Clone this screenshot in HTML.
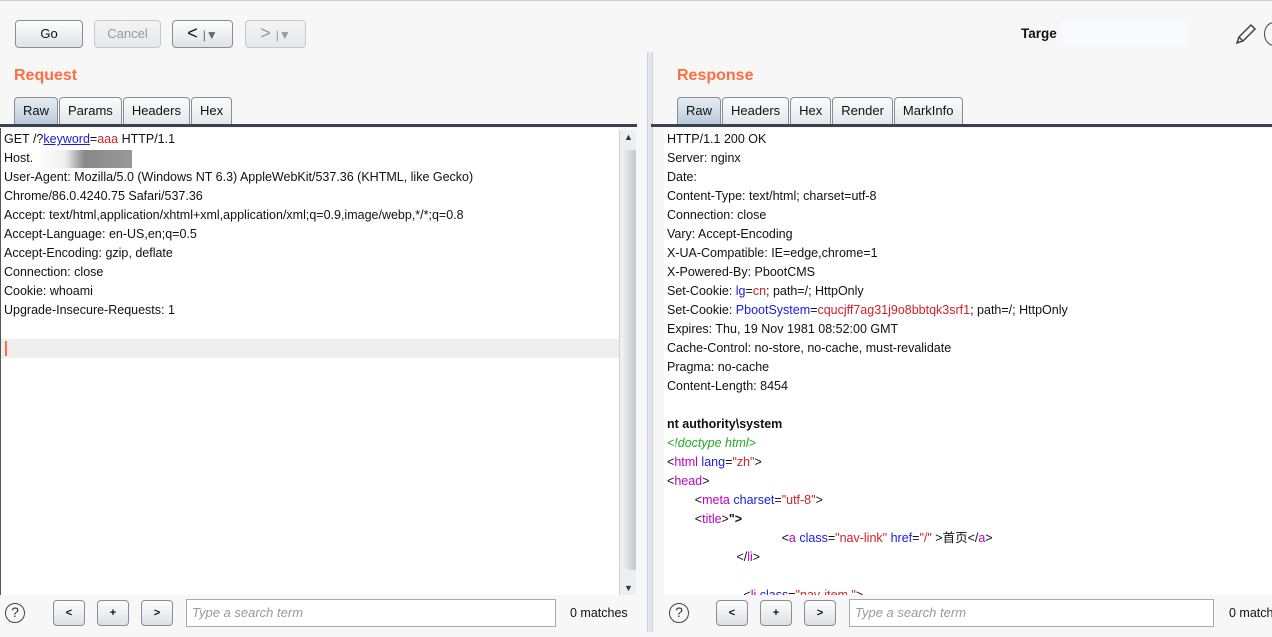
<!DOCTYPE html>
<html><head><meta charset="utf-8"><style>
*{margin:0;padding:0;box-sizing:border-box}
body{width:1272px;height:637px;overflow:hidden;background:#f7f7f7;font-family:"Liberation Sans","Noto Sans CJK SC",sans-serif;font-size:12.5px;color:#111;position:relative}
.abs{position:absolute;white-space:nowrap}
.btn{position:absolute;top:20px;height:28px;border:1px solid #8a8e94;border-radius:4px;background:linear-gradient(#fdfdfd,#dfe2e6);font-size:13px;text-align:center;line-height:26px}
.btn.dis{border-color:#c4c7cb;color:#9a9a9a;background:linear-gradient(#f4f4f4,#e6e7e9)}
.lbl{position:absolute;top:67px;color:#ff6e3f;font-weight:bold;font-size:16px}
.tabs{position:absolute;top:97px;height:28px;display:flex}
.tab{height:28px;border:1px solid #8a8e94;border-bottom:none;border-radius:4px 4px 0 0;background:linear-gradient(#fbfbfc,#e3e6ea);padding:0 8px;line-height:26px;font-size:13px;margin-right:1px}
.tab.on{background:linear-gradient(#e6edf3,#b8c9d8)}
.rule{position:absolute;top:124px;height:3px;background:#3a4250}
.ta{position:absolute;top:128px;height:467px;background:#fff;overflow:hidden}
.ln{height:19px;line-height:19px;white-space:pre}
.sb{position:absolute;top:130px;left:619px;width:17px;height:465px;background:#eceef0;border-left:1px solid #d0d2d5}
.sbtn{position:absolute;width:32px;height:26px;top:600px;border:1px solid #8a8e94;border-radius:4px;background:linear-gradient(#fdfdfd,#dde0e4);text-align:center;line-height:24px;font-size:11px;font-weight:bold}
.inp{position:absolute;top:599px;height:28px;border:1px solid #a9abae;background:#fff;color:#999;font-style:italic;font-size:13px;line-height:26px;padding-left:5px}
.help{position:absolute;top:603px;width:20px;height:20px;border:1.5px solid #444;border-radius:50%;text-align:center;line-height:17px;font-size:14px;color:#333}
.bl{color:#1a1ae0}.rd{color:#d0222a}.mg{color:#c000c0}.gr{color:#22aa22;font-style:italic}
</style></head><body>
<div class="abs" style="left:0;top:0;width:1272px;height:1px;background:#ccc"></div>
<div class="btn" style="left:15px;width:68px">Go</div>
<div class="btn dis" style="left:94px;width:67px">Cancel</div>
<div class="btn" style="left:172px;width:61px;font-size:18px;line-height:24px">&lt; <span style="font-size:12px;color:#666">|&#9660;</span></div>
<div class="btn dis" style="left:245px;width:61px;font-size:18px;line-height:24px">&gt; <span style="font-size:12px">|&#9660;</span></div>
<div class="abs" style="left:1021px;top:26px;font-weight:bold;font-size:13.5px">Targe</div>
<div class="abs" style="left:1062px;top:20px;width:125px;height:26px;background:#f8fbfc"></div>
<svg class="abs" style="left:1234px;top:22px" width="24" height="24" viewBox="0 0 24 24"><path d="M3 21 L5 15 L17 3 L21 7 L9 19 Z M5 15 L9 19" fill="none" stroke="#444" stroke-width="1.5"/></svg>
<div class="abs" style="left:1264px;top:22px;width:20px;height:24px;border:1.5px solid #444;border-radius:50%"></div>

<div class="lbl" style="left:14px">Request</div>
<div class="tabs" style="left:14px"><div class="tab on">Raw</div><div class="tab">Params</div><div class="tab">Headers</div><div class="tab">Hex</div></div>
<div class="rule" style="left:0;width:637px"></div>
<div class="ta" style="left:0;width:619px;border-left:1px solid #555">
<div style="padding-left:3px;padding-top:2px">
<div class="ln">GET /?<span class="bl" style="text-decoration:underline">keyword</span>=<span class="rd">aaa</span> HTTP/1.1</div>
<div class="ln">Host. <span style="display:inline-block;width:95px;height:18px;vertical-align:middle;background:linear-gradient(90deg,#fff 0,#eee 30%,#888 50%,#999 100%)"></span></div>
<div class="ln">User-Agent: Mozilla/5.0 (Windows NT 6.3) AppleWebKit/537.36 (KHTML, like Gecko)</div>
<div class="ln">Chrome/86.0.4240.75 Safari/537.36</div>
<div class="ln">Accept: text/html,application/xhtml+xml,application/xml;q=0.9,image/webp,*/*;q=0.8</div>
<div class="ln">Accept-Language: en-US,en;q=0.5</div>
<div class="ln">Accept-Encoding: gzip, deflate</div>
<div class="ln">Connection: close</div>
<div class="ln">Cookie: whoami</div>
<div class="ln">Upgrade-Insecure-Requests: 1</div>
<div class="ln"> </div>
</div>
<div class="abs" style="left:0;top:211px;width:618px;height:19px;background:#eee"></div>
<div class="abs" style="left:4px;top:213px;width:2px;height:15px;background:#ff6e3f"></div>
</div>
<div class="sb"><div class="abs" style="top:2px;left:4px;font-size:9px;color:#333">&#9650;</div>
<div class="abs" style="top:20px;left:1px;width:15px;height:420px;border-radius:0 0 0 10px;background:linear-gradient(90deg,#f2f3f5,#c4c7cc)"></div>
<div class="abs" style="bottom:2px;left:4px;font-size:9px;color:#333">&#9660;</div></div>
<div class="help" style="left:5px">?</div>
<div class="sbtn" style="left:53px">&lt;</div><div class="sbtn" style="left:97px">+</div><div class="sbtn" style="left:141px">&gt;</div>
<div class="inp" style="left:186px;width:370px">Type a search term</div>
<div class="abs" style="left:570px;top:606px;font-size:12.5px">0 matches</div>

<div class="abs" style="left:647px;top:52px;width:6px;height:580px;background:#e4e6ea;border-left:1px solid #cfd2d6;border-right:1px solid #cfd2d6"></div>

<div class="lbl" style="left:677px">Response</div>
<div class="tabs" style="left:677px"><div class="tab on">Raw</div><div class="tab">Headers</div><div class="tab">Hex</div><div class="tab">Render</div><div class="tab">MarkInfo</div></div>
<div class="rule" style="left:651px;width:621px"></div>
<div class="ta" style="left:664px;width:608px">
<div style="padding-left:3px;padding-top:2px">
<div class="ln">HTTP/1.1 200 OK</div>
<div class="ln">Server: nginx</div>
<div class="ln">Date:</div>
<div class="ln">Content-Type: text/html; charset=utf-8</div>
<div class="ln">Connection: close</div>
<div class="ln">Vary: Accept-Encoding</div>
<div class="ln">X-UA-Compatible: IE=edge,chrome=1</div>
<div class="ln">X-Powered-By: PbootCMS</div>
<div class="ln">Set-Cookie: <span class="bl">lg</span>=<span class="rd">cn</span>; path=/; HttpOnly</div>
<div class="ln">Set-Cookie: <span class="bl">PbootSystem</span>=<span class="rd">cqucjff7ag31j9o8bbtqk3srf1</span>; path=/; HttpOnly</div>
<div class="ln">Expires: Thu, 19 Nov 1981 08:52:00 GMT</div>
<div class="ln">Cache-Control: no-store, no-cache, must-revalidate</div>
<div class="ln">Pragma: no-cache</div>
<div class="ln">Content-Length: 8454</div>
<div class="ln"> </div>
<div class="ln" style="font-weight:bold">nt authority\system</div>
<div class="ln gr">&lt;!doctype html&gt;</div>
<div class="ln">&lt;<span class="mg">html</span> <span class="bl">lang</span>=<span class="rd">"zh"</span>&gt;</div>
<div class="ln">&lt;<span class="mg">head</span>&gt;</div>
<div class="ln">        &lt;<span class="mg">meta</span> <span class="bl">charset</span>=<span class="rd">"utf-8"</span>&gt;</div>
<div class="ln">        &lt;<span class="mg">title</span>&gt;<b>"&gt;</b></div>
<div class="ln">                                 &lt;<span class="mg">a</span> <span class="bl">class</span>=<span class="rd">"nav-link"</span> <span class="bl">href</span>=<span class="rd">"/"</span> &gt;首页&lt;/<span class="mg">a</span>&gt;</div>
<div class="ln">                    &lt;/<span class="mg">li</span>&gt;</div>
<div class="ln"> </div>
<div class="ln">                      &lt;<span class="mg">li</span> <span class="bl">class</span>=<span class="rd">"nav-item "</span>&gt;</div>
</div></div>
<div class="help" style="left:669px">?</div>
<div class="sbtn" style="left:716px">&lt;</div><div class="sbtn" style="left:760px">+</div><div class="sbtn" style="left:804px">&gt;</div>
<div class="inp" style="left:849px;width:365px">Type a search term</div>
<div class="abs" style="left:1229px;top:606px;font-size:12.5px">0 matches</div>
</body></html>
